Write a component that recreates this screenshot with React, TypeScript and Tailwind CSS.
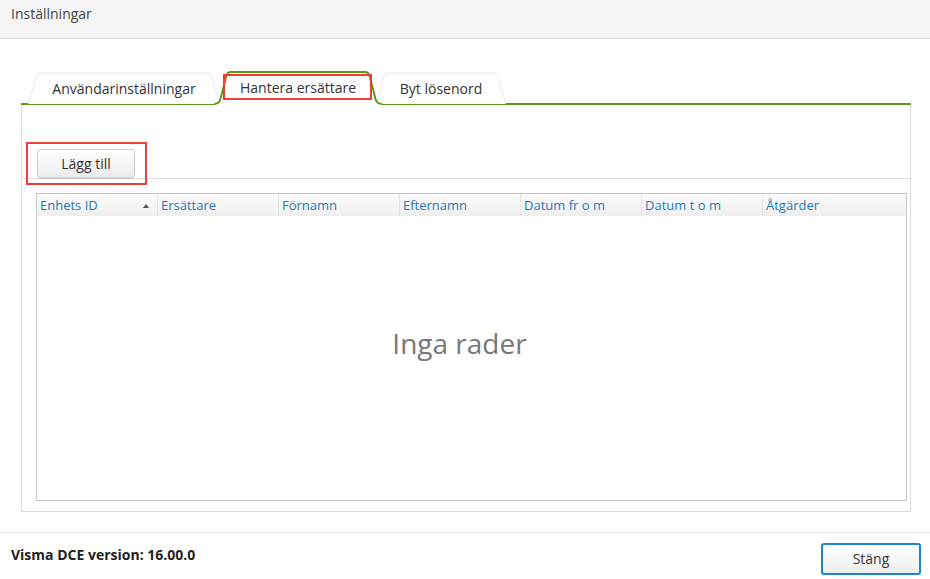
import React from "react";

const font = { fontFamily: '"Open Sans", "Noto Sans", sans-serif' };

function InactiveTab({ label, width, className = "" }: { label: string; width: number; className?: string }) {
  return (
    <div className={"relative flex h-[32px] items-center justify-center " + className} style={{ width }}>
      <svg className="absolute inset-0" width={width} height={32} viewBox={`0 0 ${width} 32`}>
        <path
          d={`M0.5,32 L8,4 Q9,1 13,1 L${width - 13},1 Q${width - 9},1 ${width - 8},4 L${width - 0.5},32`}
          fill="#ffffff"
          stroke="#e6e9ec"
          strokeWidth={1}
        />
      </svg>
      <span className="relative pt-[1px] text-[14px] text-[#333]">{label}</span>
    </div>
  );
}

function ActiveTab() {
  const w = 168;
  return (
    <div className="relative z-10 -mb-[2px] ml-[-6px] flex h-[34px] items-center justify-center" style={{ width: w }}>
      <svg className="absolute inset-0" width={w} height={34} viewBox={`0 0 ${w} 34`}>
        <path
          d={`M0,34 L0,32 Q5,32 6,28 L12,4 Q13,1 17,1 L${w - 17},1 Q${w - 13},1 ${w - 12},4 L${w - 6},28 Q${w - 5},32 ${w},32 L${w},34 Z`}
          fill="#ffffff"
        />
        <path
          d={`M0,33 Q5,33 6.5,28 L12.5,4.5 Q13.5,1 17,1 L${w - 17},1 Q${w - 13.5},1 ${w - 12.5},4.5 L${w - 6.5},28 Q${w - 5},33 ${w},33`}
          fill="none"
          stroke="#5b9b10"
          strokeWidth={2}
        />
      </svg>
      <span className="relative pb-[1px] text-[14px] text-[#333]">Hantera ersättare</span>
      <div className="absolute left-[9px] top-[3px] h-[26px] w-[149px] border-2 border-[#f23b3b]" />
    </div>
  );
}

const columns = [
  { label: "Enhets ID", w: 121, sort: true },
  { label: "Ersättare", w: 121 },
  { label: "Förnamn", w: 121 },
  { label: "Efternamn", w: 121 },
  { label: "Datum fr o m", w: 121 },
  { label: "Datum t o m", w: 121 },
  { label: "Åtgärder", w: 143 },
];

export default function App() {
  return (
    <div className="flex h-[579px] w-[930px] flex-col overflow-hidden bg-white text-[#333]" style={font}>
      {/* Header */}
      <div className="h-[39px] shrink-0 border-b border-[#dedede] bg-[#f5f5f5] pl-[11px] pt-[3px] text-[14px] text-[#444]">
        Inställningar
      </div>

      {/* Body */}
      <div className="ml-[21px] mt-[32px] w-[890px]">
        {/* Tab bar */}
        <div className="flex h-[34px] items-start border-b-2 border-[#5b9b10] pl-[7px]">
          <div className="mt-[1px]">
            <InactiveTab label="Användarinställningar" width={192} />
          </div>
          <ActiveTab />
          <div className="ml-[-6px] mt-[1px]">
            <InactiveTab label="Byt lösenord" width={130} />
          </div>
        </div>

        {/* Panel */}
        <div className="flex h-[407px] flex-col border-x border-b border-[#dcdcdc]">
          <div className="flex h-[74px] shrink-0 items-end border-b border-[#dedede] pl-[15px]">
            <div className="relative">
              <button className="h-[29px] w-[98px] rounded-[3px] border border-[#cfcfcf] bg-gradient-to-b from-[#ffffff] to-[#ececec] text-[14px] text-[#333] shadow-[0_1px_1px_rgba(0,0,0,0.08)]">
                Lägg till
              </button>
              <div className="absolute left-[-11px] top-[-7px] h-[43px] w-[121px] border-2 border-[#f23b3b]" />
            </div>
          </div>

          {/* Grid */}
          <div className="ml-[14px] mr-[3px] mt-[14px] flex h-[308px] flex-col border border-[#c8c8c8]">
            <div className="flex h-[22px] shrink-0 bg-gradient-to-b from-[#fbfbfb] to-[#efefef]">
              {columns.map((c, i) => (
                <div
                  key={c.label}
                  className={
                    "flex items-center justify-between pl-[3px] pt-[2px] text-[13px] text-[#2579b9] " +
                    (i < columns.length - 1 ? "border-r border-[#e3e3e3]" : "")
                  }
                  style={{ width: c.w }}
                >
                  <span>{c.label}</span>
                  {c.sort && (
                    <span className="mr-[8px] h-0 w-0 border-x-[3.5px] border-b-[4px] border-x-transparent border-b-[#555]" />
                  )}
                </div>
              ))}
            </div>
            <div className="flex flex-1 items-start justify-center pr-[24px] pt-[106px]">
              <span className="text-[28px] text-[#777]">Inga rader</span>
            </div>
          </div>
        </div>
      </div>

      {/* Footer */}
      <div className="mt-[20px] flex flex-1 items-center justify-between border-t border-[#e3e3e3] pl-[11px] pr-[9px]">
        <span className="pb-[3px] text-[14px] font-bold text-[#222]">Visma DCE version: 16.00.0</span>
        <button className="mt-[5px] h-[32px] w-[100px] rounded-[3px] border-2 border-[#1a86d6] bg-gradient-to-b from-[#ffffff] to-[#eeeeee] text-[14px] text-[#333]">
          Stäng
        </button>
      </div>
    </div>
  );
}
